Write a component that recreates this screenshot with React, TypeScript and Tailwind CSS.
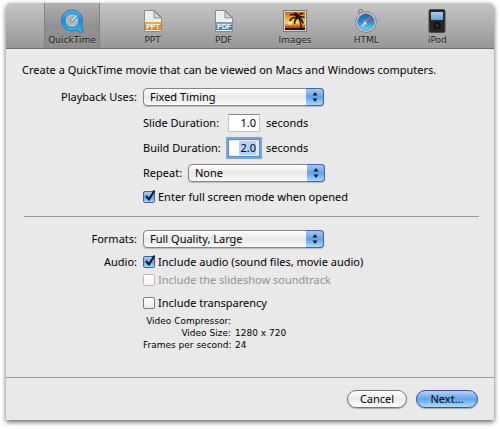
import type { ReactNode } from "react";
import clsx from "clsx";

function QuickTimeIcon() {
  return (
    <svg width="24" height="24" viewBox="0 0 24 24" aria-hidden="true">
      <defs>
        <linearGradient id="qt" x1="0" y1="0" x2="0" y2="1">
          <stop offset="0" stopColor="#48b4ee" />
          <stop offset="0.5" stopColor="#1790e0" />
          <stop offset="1" stopColor="#2cc0f6" />
        </linearGradient>
      </defs>
      <path
        d="M12 1C6.200 1 1.500 5.700 1.500 11.500S6.200 22 12 22c1.900 0 3.500-.4 5-1.200L18.500 23h4.300l-.4-4.600-1.300-1.700c.9-1.500 1.400-3.300 1.400-5.200C22.500 5.700 17.800 1 12 1z"
        fill="url(#qt)"
        stroke="#1b70b4"
        strokeWidth="0.8"
      />
      <circle cx="12" cy="11.500" r="7" fill="#b4b8bb" stroke="#1c6cae" strokeWidth="0.7" />
      <path d="M11.500 12l5-5.500" stroke="#1687d8" strokeWidth="3" strokeLinecap="round" />
      <path d="M11.700 11.800l4.500-5" stroke="#e2f1f8" strokeWidth="1.600" strokeLinecap="round" />
    </svg>
  );
}

function DocIcon({ label, dark, light }: { label: string; dark: string; light: string }) {
  return (
    <svg width="24" height="24" viewBox="0 0 24 24" aria-hidden="true">
      <path d="M3.500 1.500h10l7 7v14h-17z" fill="#f1f1f1" stroke="#8b8b8b" />
      <path d="M13 2v7h7z" fill="#d2d2d2" stroke="#8b8b8b" strokeWidth="0.9" />
      <path d="M6 5h5M6 8h4M6 10.500h7" stroke="#dedede" strokeWidth="0.8" />
      <rect x="4" y="13" width="16" height="8" fill={dark} />
      <rect x="4" y="13" width="16" height="3" fill={light} />
      <text
        x="12"
        y="19.500"
        textAnchor="middle"
        fontSize="7"
        fontWeight="700"
        fontFamily="Liberation Sans, sans-serif"
        fill="#fff"
      >
        {label}
      </text>
    </svg>
  );
}

function ImagesIcon() {
  return (
    <svg width="24" height="24" viewBox="0 0 24 24" aria-hidden="true">
      <defs>
        <linearGradient id="sunset" x1="0" y1="0" x2="0" y2="1">
          <stop offset="0" stopColor="#c76c12" />
          <stop offset="0.350" stopColor="#f6a81e" />
          <stop offset="0.600" stopColor="#ffd35a" />
          <stop offset="0.780" stopColor="#d4611a" />
          <stop offset="1" stopColor="#5e200c" />
        </linearGradient>
      </defs>
      <rect x="0.500" y="1.500" width="23" height="21" fill="#d6d6d6" stroke="#777" />
      <rect x="2" y="3" width="20" height="18" fill="url(#sunset)" />
      <path d="M2 19h20v2H2z" fill="#2a0f08" />
      <circle cx="7" cy="14" r="2" fill="#fff2a6" />
      <g fill="none" stroke="#1c0b05" strokeLinecap="round">
        <path d="M15.500 8.500c2 4 3 8 2.500 11.500" strokeWidth="1.500" />
        <path
          d="M15.500 8.500c-3-3.500-6-3.500-8-2.500M15.500 8.500c-4-.5-7 .5-8.500 3M15.500 8.500c-2.500 1-4 3-4 6M15.500 8.500c-.5-2.500-2-4-3.500-4.500M15.500 8.500c0-2.500 2-4 4-4M15.500 8.500c2-1 4-1 5.500 0M15.500 8.500c2 1 4 3 4.500 5.500"
          strokeWidth="1.500"
        />
      </g>
    </svg>
  );
}

function SafariIcon() {
  return (
    <svg width="24" height="24" viewBox="0 0 24 24" aria-hidden="true">
      <defs>
        <linearGradient id="dial" x1="0" y1="0" x2="0" y2="1">
          <stop offset="0" stopColor="#1566b4" />
          <stop offset="0.500" stopColor="#248fdc" />
          <stop offset="1" stopColor="#6bdcf8" />
        </linearGradient>
      </defs>
      <circle cx="6.500" cy="2.500" r="2" fill="none" stroke="#747474" />
      <circle cx="12" cy="13" r="10.300" fill="#dddedf" stroke="#777b7e" />
      <circle cx="12" cy="13" r="8.300" fill="url(#dial)" stroke="#54758f" strokeWidth="0.800" />
      <path d="M17.500 7l-4.300 7.200-2.400-2.400z" fill="#e0342b" />
      <path d="M6.500 19l4.300-7.200 2.400 2.400z" fill="#c9d9e6" />
      <path d="M17.500 7l-6.700 4.800 1.200 1.200z" fill="#f47a68" />
    </svg>
  );
}

function IpodIcon() {
  return (
    <svg width="24" height="24" viewBox="0 0 24 24" aria-hidden="true">
      <defs>
        <linearGradient id="screen" x1="0" y1="0" x2="0" y2="1">
          <stop offset="0" stopColor="#a9d0f2" />
          <stop offset="1" stopColor="#5f9fdb" />
        </linearGradient>
      </defs>
      <rect x="4" y="0.500" width="16" height="23" rx="1.500" fill="#242526" stroke="#4a4a4a" />
      <rect x="6" y="3" width="12" height="8" fill="url(#screen)" />
      <circle cx="12" cy="16.500" r="4.500" fill="#111" stroke="#3b3b3b" strokeWidth="0.700" />
      <circle cx="12" cy="16.500" r="1.600" fill="#383838" />
    </svg>
  );
}

function Tab({ label, icon, active }: { label: string; icon: ReactNode; active?: boolean }) {
  return (
    <button
      type="button"
      aria-pressed={!!active}
      className={clsx(
        "flex h-[45px] w-14 flex-col items-center justify-self-center pt-[6px] font-['DejaVu_Sans',sans-serif] text-[9px] leading-[14px] text-[#1c1c1c]",
        active &&
          "shrink-0 border-x border-[#828282] bg-linear-to-b from-[#b0b0b0] via-[#929292] to-[#8c8c8c]",
      )}
    >
      {icon}
      <span className="[text-shadow:0_1px_0_#ffffff50]">{label}</span>
    </button>
  );
}

function PopUp({ id, value, className }: { id: string; value: string; className: string }) {
  return (
    <div className={clsx("relative h-[18px]", className)}>
      <select
        id={id}
        className="block h-full w-full appearance-none rounded-[4px] border border-[#858585] bg-linear-to-b from-white via-[#e9e9e9] to-[#fbfbfb] pl-1.5 leading-4 shadow-[0_1px_1px_#0003] outline-none"
      >
        <option>{value}</option>
      </select>
      <span className="pointer-events-none absolute inset-y-0 right-0 flex w-[18px] items-center justify-center rounded-r-[4px] border border-l-0 border-[#4863a3] bg-linear-to-b from-[#a4c9f2] via-[#5fa2ea] to-[#a6dcff]">
        <svg width="6" height="12" viewBox="0 0 6 12" aria-hidden="true">
          <path d="M3 1l2.500 3.500h-5zM3 11l2.500-3.500h-5z" fill="#101820" />
        </svg>
      </span>
    </div>
  );
}

function Check({ label, checked, disabled }: { label: string; checked?: boolean; disabled?: boolean }) {
  return (
    <label className={clsx("flex h-[18px] items-center gap-[3px]", disabled && "text-[#929292]")}>
      <span className="relative size-3 shrink-0">
        <input
          type="checkbox"
          defaultChecked={checked}
          disabled={disabled}
          className="block size-3 appearance-none rounded-[2px] border border-[#7b7b7b] bg-linear-to-b from-white to-[#ececec] checked:border-[#43619f] checked:from-[#a9ccf3] checked:via-[#65a5e9] checked:to-[#a6dcfd] disabled:border-[#bcbcbc] disabled:to-[#f2f2f2]"
        />
        {checked && (
          <svg
            className="pointer-events-none absolute -top-0.5 left-0"
            width="14"
            height="14"
            viewBox="0 0 14 14"
            aria-hidden="true"
          >
            <path d="M3 7l3 3.500L11.500 1.500" fill="none" stroke="#101828" strokeWidth="2" />
          </svg>
        )}
      </span>
      <span>{label}</span>
    </label>
  );
}

function App() {
  return (
    <div className="bg-white px-1.5 pt-[3px] pb-2 font-['Noto_Sans','Open_Sans',sans-serif] text-[11px] leading-[18px] text-black">
      <main className="overflow-hidden rounded-t-[5px] bg-[#e9e9e9] shadow-[0_2px_5px_#000000a0]">
        <nav className="flex border-b border-[#6d6d6d] bg-linear-to-b from-[#c6c6c6] to-[#979797] pr-[21px] pl-[38px]">
          <Tab label="QuickTime" icon={<QuickTimeIcon />} active />
          <div className="ml-[17px] grid flex-1 grid-cols-5">
            <Tab label="PPT" icon={<DocIcon label="PPT" dark="#e8871a" light="#f3a53f" />} />
            <Tab label="PDF" icon={<DocIcon label="PDF" dark="#4a80a8" light="#76a3c3" />} />
            <Tab label="Images" icon={<ImagesIcon />} />
            <Tab label="HTML" icon={<SafariIcon />} />
            <Tab label="iPod" icon={<IpodIcon />} />
          </div>
        </nav>

        <form id="export" className="pt-3 pb-[26px]">
          <p className="pl-4">Create a QuickTime movie that can be viewed on Macs and Windows computers.</p>

          <div className="mt-[9px] grid grid-cols-[131px_1fr] gap-x-1.5">
            <label htmlFor="playback" className="text-right">
              Playback Uses:
            </label>
            <PopUp id="playback" value="Fixed Timing" className="w-[181px]" />

            <div className="col-start-2 mt-[7px] flex flex-col gap-[5px]">
              <div className="flex h-5 items-center">
                <label htmlFor="slide" className="w-[85px]">
                  Slide Duration:
                </label>
                <input
                  id="slide"
                  defaultValue="1.0"
                  className="h-[18px] w-8 border border-[#c4c4c4] border-t-[#858585] bg-white pr-[3px] text-right outline-none"
                />
                <span className="ml-1.5">seconds</span>
              </div>
              <div className="flex h-5 items-center">
                <label htmlFor="build" className="w-[85px]">
                  Build Duration:
                </label>
                <input
                  id="build"
                  defaultValue="2.0"
                  className="h-[18px] w-8 border border-[#5f8fca] bg-white bg-linear-to-r from-white from-35% to-[#b1d2fb] to-35% bg-clip-content py-px pr-[3px] text-right ring-2 ring-[#79a5d9] outline-none"
                />
                <span className="ml-1.5">seconds</span>
              </div>
              <div className="flex h-5 items-center">
                <label htmlFor="repeat" className="w-[45px]">
                  Repeat:
                </label>
                <PopUp id="repeat" value="None" className="w-[137px]" />
              </div>
              <Check label="Enter full screen mode when opened" checked />
            </div>
          </div>

          <hr className="mt-[10px] mr-[15px] mb-[13px] ml-[18px] border-[#969696]" />

          <div className="grid grid-cols-[131px_1fr] gap-x-1.5 gap-y-[5px]">
            <label htmlFor="formats" className="text-right">
              Formats:
            </label>
            <PopUp id="formats" value="Full Quality, Large" className="w-[181px]" />
            <span className="text-right">Audio:</span>
            <div>
              <Check label="Include audio (sound files, movie audio)" checked />
              <Check label="Include the slideshow soundtrack" disabled />
            </div>
            <div className="col-start-2">
              <Check label="Include transparency" />
              <dl className="mt-[3px] grid grid-cols-[88px_1fr] gap-x-1 font-['DejaVu_Sans',sans-serif] text-[9px] leading-[12px] whitespace-nowrap">
                <dt className="text-right">Video Compressor:</dt>
                <dd />
                <dt className="text-right">Video Size:</dt>
                <dd>1280 x 720</dd>
                <dt className="text-right">Frames per second:</dt>
                <dd>24</dd>
              </dl>
            </div>
          </div>
        </form>

        <footer className="flex justify-end gap-[9px] border-t border-[#969696] pt-3 pr-4 pb-3">
          <button
            type="button"
            className="h-[18px] w-[60px] rounded-full border border-[#777] bg-linear-to-b from-white via-[#ececec] to-white leading-4 shadow-[0_1px_1px_#0004]"
          >
            Cancel
          </button>
          <button
            type="submit"
            form="export"
            className="h-[18px] w-[62px] rounded-full border border-[#3d4fa0] bg-linear-to-b from-[#b4d2f5] via-[#62a3ea] to-[#a8e0ff] leading-4 shadow-[0_1px_1px_#0004]"
          >
            Next...
          </button>
        </footer>
      </main>
    </div>
  );
}

export default App;
